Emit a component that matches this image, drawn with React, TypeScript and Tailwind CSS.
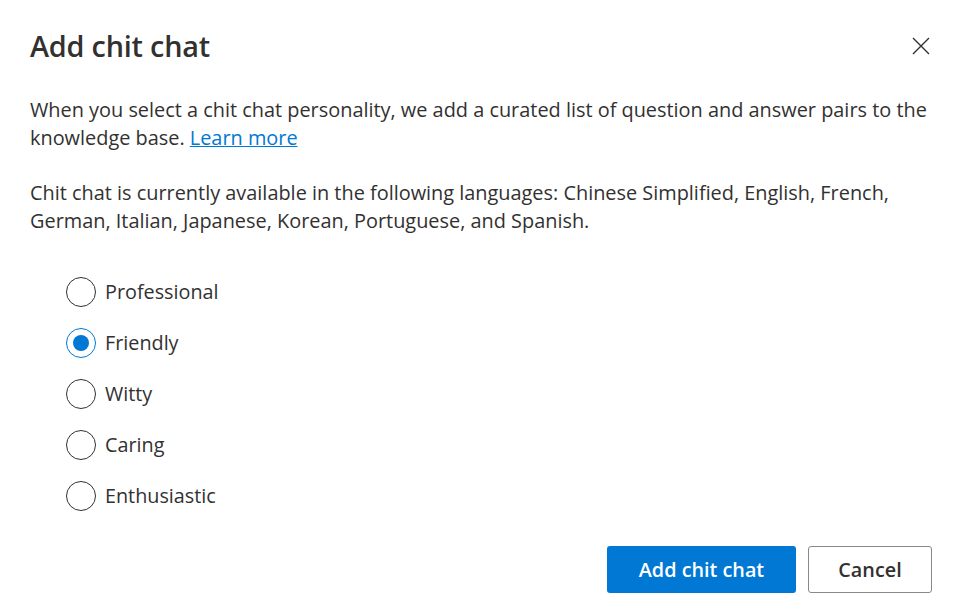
import React, { useState } from "react";

const options = ["Professional", "Friendly", "Witty", "Caring", "Enthusiastic"];

export default function App() {
  const [selected, setSelected] = useState("Friendly");
  return (
    <div
      className="w-[964px] h-[614px] bg-white text-[#323130] overflow-hidden"
      style={{ fontFamily: '"Open Sans", "Noto Sans", sans-serif' }}
    >
      <div className="flex items-start justify-between pl-[30px] pr-[30px] pt-[26px]">
        <h1 className="text-[28.8px] leading-[40px] font-semibold tracking-[-0.2px]">Add chit chat</h1>
        <button className="mt-[9px] mr-[2px] w-[22px] h-[22px] flex items-center justify-center text-[#323130]">
          <svg width="20" height="20" viewBox="0 0 20 20" fill="none" stroke="currentColor" strokeWidth="1.4">
            <path d="M2 2 L18 18 M18 2 L2 18" />
          </svg>
        </button>
      </div>
      <div className="px-[30px] pt-[30px] text-[19.9px] leading-[28px]">
        <p>
          When you select a chit chat personality, we add a curated list of question and answer pairs to the
          knowledge base.{" "}
          <a href="#" className="text-[#0078d4] underline">
            Learn more
          </a>
        </p>
        <p className="mt-[27px]">
          Chit chat is currently available in the following languages: Chinese Simplified, English, French,
          German, Italian, Japanese, Korean, Portuguese, and Spanish.
        </p>
      </div>
      <div className="flex flex-col gap-[21px] pl-[66px] pt-[42px]">
        {options.map((o) => {
          const on = selected === o;
          return (
            <label key={o} className="flex items-center gap-[9px] h-[30px] cursor-pointer" onClick={() => setSelected(o)}>
              <span
                className={
                  on
                    ? "w-[30px] h-[30px] rounded-full border border-[#0078d4] flex items-center justify-center"
                    : "w-[30px] h-[30px] rounded-full border border-[#323130] flex items-center justify-center"
                }
              >
                {on && <span className="w-[16px] h-[16px] rounded-full bg-[#0078d4]" />}
              </span>
              <span className="text-[19.8px] leading-[28px]">{o}</span>
            </label>
          );
        })}
      </div>
      <div className="flex justify-end gap-[12px] pr-[32px] pt-[35px]">
        <button className="w-[189px] h-[47px] rounded-[3px] bg-[#0078d4] text-white text-[19.8px] font-semibold">
          Add chit chat
        </button>
        <button className="w-[124px] h-[47px] rounded-[3px] border border-[#8a8886] bg-white text-[#323130] text-[19.8px] font-semibold">
          Cancel
        </button>
      </div>
    </div>
  );
}
